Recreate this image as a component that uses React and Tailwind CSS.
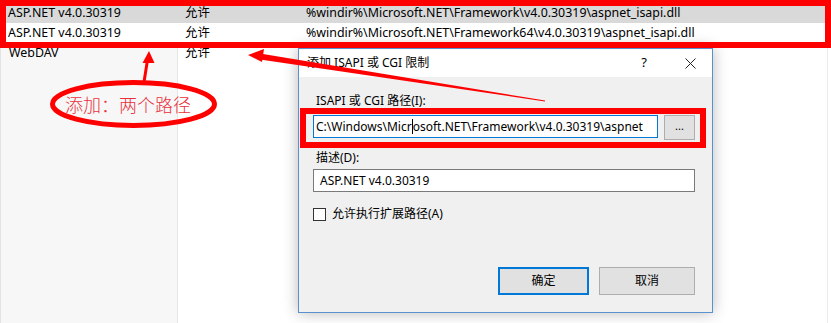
import React from 'react'

const rows = [
  { name: 'ASP.NET v4.0.30319', state: '允许', path: '%windir%\\Microsoft.NET\\Framework\\v4.0.30319\\aspnet_isapi.dll', bg: 'bg-[#d9d9d9]' },
  { name: 'ASP.NET v4.0.30319', state: '允许', path: '%windir%\\Microsoft.NET\\Framework64\\v4.0.30319\\aspnet_isapi.dll', bg: 'bg-white' },
  { name: 'WebDAV', state: '允许', path: '', bg: '' },
]

function ListView() {
  return (
    <div className="flex flex-col h-full w-[828px] border-r border-[#ececec] pt-[3px] text-[12.4px] text-black">
      {rows.map((r, i) => (
        <div key={i} className={`grid grid-cols-[178px_120px_1fr] h-[20px] items-center ${r.bg}`}>
          <div className={`pl-[8px] h-full flex items-center ${r.bg ? '' : 'bg-[#f7f7f7] border-l border-[#e3e3e3] border-r border-r-[#e6e6e6]'}`}>{r.name}</div>
          <div className="pl-[7px]">{r.state}</div>
          <div className="pl-[8px] whitespace-nowrap">{r.path}</div>
        </div>
      ))}
      <div className="grid grid-cols-[178px_120px_1fr] flex-1">
        <div className="bg-[#f7f7f7] border-l border-[#e3e3e3] border-r border-r-[#e6e6e6]" />
        <div />
        <div />
      </div>
    </div>
  )
}

function Dialog() {
  return (
    <div className="absolute left-[298px] top-[48px] w-[415px] h-[265px] flex flex-col border border-[#5b8fd0] bg-[#f0f0f0] shadow-[0_0_14px_rgba(0,0,0,0.28)] text-[12px] text-black">
      <div className="h-[28px] bg-white flex items-center pl-[8px] pr-[16px]">
        <span className="flex-1">添加 ISAPI 或 CGI 限制</span>
        <span className="text-[13px] mr-[38px]">?</span>
        <svg width="11" height="11" viewBox="0 0 11 11">
          <path d="M0.5 0.5 L10.5 10.5 M10.5 0.5 L0.5 10.5" stroke="#222" strokeWidth="1" />
        </svg>
      </div>
      <div className="flex-1 flex flex-col pl-[14px] pr-[17px] pt-[16px] pb-[17px]">
        <div className="pl-[3px] h-[16px] leading-[16px]">ISAPI 或 CGI 路径(I):</div>
        <div className="flex gap-[6px] mt-[6px]">
          <div className="flex-1 h-[23px] border border-[#0078d7] bg-white flex items-center pl-[2px] overflow-hidden whitespace-nowrap">
            <span>C:\Windows\Micr</span>
            <span className="w-px h-[15px] bg-black" />
            <span>osoft.NET\Framework\v4.0.30319\aspnet</span>
          </div>
          <div className="w-[31px] h-[25px] border border-[#adadad] bg-[#e1e1e1] flex items-center justify-center text-[11px] leading-none pb-[4px]">...</div>
        </div>
        <div className="pl-[3px] h-[16px] leading-[16px] mt-[10px]">描述(D):</div>
        <div className="h-[23px] mt-[3px] border border-[#7a7a7a] bg-white flex items-center pl-[6px]">ASP.NET v4.0.30319</div>
        <label className="flex items-center gap-[6px] mt-[13px]">
          <span className="w-[13px] h-[13px] border border-[#333] bg-white" />
          <span>允许执行扩展路径(A)</span>
        </label>
        <div className="flex-1" />
        <div className="flex justify-end gap-[10px]">
          <div className="w-[91px] h-[28px] border-2 border-[#0078d7] bg-[#e1e1e1] flex items-center justify-center">确定</div>
          <div className="w-[96px] h-[28px] border border-[#adadad] bg-[#e1e1e1] flex items-center justify-center">取消</div>
        </div>
      </div>
    </div>
  )
}

function Annotations() {
  return (
    <>
      <svg className="absolute inset-0" width="831" height="323" viewBox="0 0 831 323">
        <rect x="3" y="3" width="825" height="42" fill="none" stroke="#ff0000" strokeWidth="6" />
        <rect x="303" y="111" width="400" height="34" fill="none" stroke="#ff0000" strokeWidth="6" />
        <ellipse cx="133.5" cy="104" rx="81" ry="21.5" fill="none" stroke="#ff0000" strokeWidth="5" />
        <path d="M144 82 L147.5 60" stroke="#ff0000" strokeWidth="3" />
        <polygon points="149,51 142.5,63 154.5,63" fill="#ff0000" />
        <polygon points="260,53.5 260,59.5 545,101.5 545,100.5" fill="#ff0000" />
        <polygon points="248,55 264,49 262,62" fill="#ff0000" />
      </svg>
      <div className="absolute left-[65px] top-[93px] text-[18px] leading-[22px] text-[#e8303c] font-['Noto_Sans_CJK_SC',sans-serif] font-light">添加：两个路径</div>
    </>
  )
}

export default function App() {
  return (
    <div className="relative w-[831px] h-[323px] overflow-hidden bg-white font-['Noto_Sans','Noto_Sans_CJK_SC',sans-serif]">
      <ListView />
      <Dialog />
      <Annotations />
    </div>
  )
}
